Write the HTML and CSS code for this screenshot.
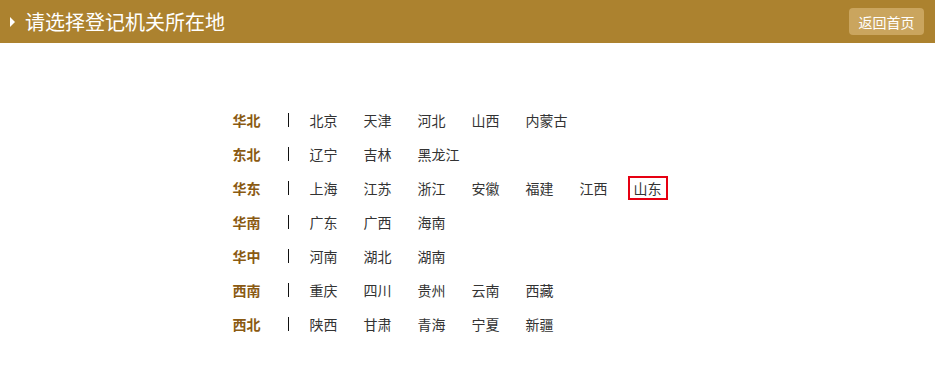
FILE: index.html
```html
<!DOCTYPE html>
<html lang="zh-CN">
<head>
<meta charset="utf-8">
<title>请选择登记机关所在地</title>
<link rel="stylesheet" href="styles.css">
</head>
<body>
<div class="header">
  <div class="title"><span class="arrow"></span>请选择登记机关所在地</div>
  <a class="back" href="#">返回首页</a>
</div>
<div class="content">
  <div class="list">
    <div class="row"><span class="region">华北</span><span class="sep"></span>
      <a class="item">北京</a><a class="item">天津</a><a class="item">河北</a><a class="item">山西</a><a class="item">内蒙古</a></div>
    <div class="row"><span class="region">东北</span><span class="sep"></span>
      <a class="item">辽宁</a><a class="item">吉林</a><a class="item">黑龙江</a></div>
    <div class="row"><span class="region">华东</span><span class="sep"></span>
      <a class="item">上海</a><a class="item">江苏</a><a class="item">浙江</a><a class="item">安徽</a><a class="item">福建</a><a class="item">江西</a><a class="item active">山东</a></div>
    <div class="row"><span class="region">华南</span><span class="sep"></span>
      <a class="item">广东</a><a class="item">广西</a><a class="item">海南</a></div>
    <div class="row"><span class="region">华中</span><span class="sep"></span>
      <a class="item">河南</a><a class="item">湖北</a><a class="item">湖南</a></div>
    <div class="row"><span class="region">西南</span><span class="sep"></span>
      <a class="item">重庆</a><a class="item">四川</a><a class="item">贵州</a><a class="item">云南</a><a class="item">西藏</a></div>
    <div class="row"><span class="region">西北</span><span class="sep"></span>
      <a class="item">陕西</a><a class="item">甘肃</a><a class="item">青海</a><a class="item">宁夏</a><a class="item">新疆</a></div>
  </div>
</div>
</body>
</html>
```
FILE: styles.css
```css
* { box-sizing: border-box; }
html, body { margin: 0; padding: 0; background: #fff; }
body {
  font-family: "Noto Sans CJK SC", "Noto Sans", sans-serif;
  color: #333;
}
.header {
  height: 43px;
  background: #ac822f;
  display: flex;
  align-items: center;
  justify-content: space-between;
  padding: 0 11px 0 10px;
}
.title {
  display: flex;
  align-items: center;
  color: #fff;
  font-size: 20px;
  line-height: 43px;
}
.arrow {
  width: 0;
  height: 0;
  border-top: 5px solid transparent;
  border-bottom: 5px solid transparent;
  border-left: 5px solid #fff;
  margin-right: 10px;
}
.back {
  display: flex;
  align-items: center;
  justify-content: center;
  width: 75px;
  height: 27px;
  border-radius: 4px;
  background: #caa55e;
  color: #fff;
  font-size: 14px;
  text-decoration: none;
}
.content {
  padding-top: 60px;
}
.list {
  width: 470px;
  margin: 0 auto;
}
.row {
  display: flex;
  align-items: center;
  height: 34px;
  gap: 14px;
}
.region {
  width: 55px;
  margin-right: -14px;
  font-size: 14px;
  font-weight: bold;
  color: #8a5a12;
}
.sep {
  width: 1px;
  height: 14px;
  background: #111;
  margin-right: 1px;
}
.item {
  display: inline-block;
  padding: 0 4px;
  height: 24px;
  line-height: 20px;
  border: 2px solid transparent;
  font-size: 14px;
  color: #333;
  white-space: nowrap;
  min-width: 40px;
}
.item.active {
  border-color: #e60012;
}
```
